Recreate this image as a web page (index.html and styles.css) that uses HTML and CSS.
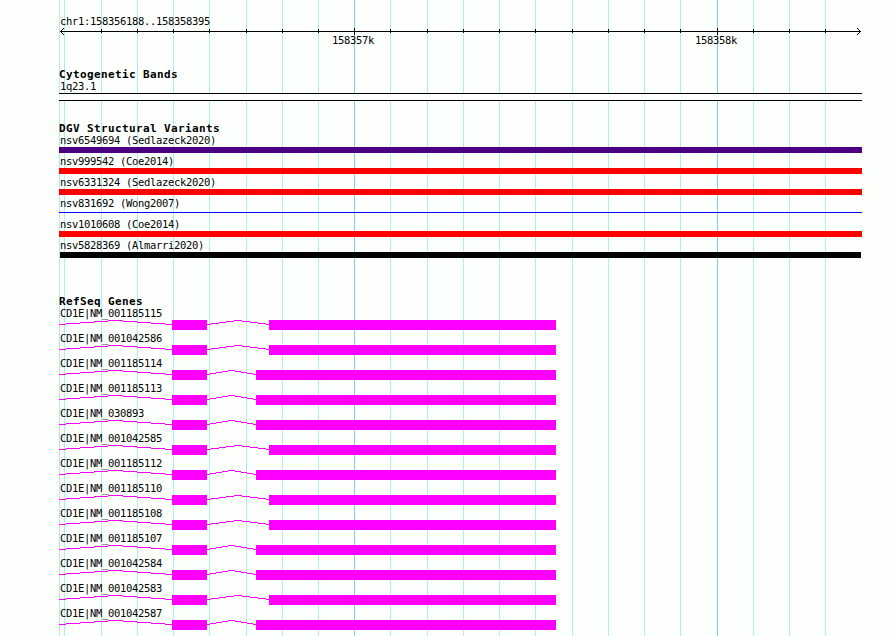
FILE: index.html
```html
<!DOCTYPE html>
<html lang="en">
<head>
    <meta charset="UTF-8">
    <meta name="viewport" content="width=device-width, initial-scale=1.0">
    <title>chr1:158356188..158358395</title>
    <link rel="stylesheet" href="styles.css">
    <script src="browser.js" defer></script>
</head>
<body>
    <div class="browser">
        <svg class="grid" id="grid" width="890" height="636" shape-rendering="crispEdges"></svg>

        <section class="ruler">
            <p class="label">chr1:158356188..158358395</p>
            <svg class="scale" id="scale" width="803" height="9" shape-rendering="crispEdges"></svg>
            <div class="scale-labels">
                <span class="label">158357k</span>
                <span class="label">158358k</span>
            </div>
        </section>

        <section class="bands">
            <h2>Cytogenetic Bands</h2>
            <p class="label">1q23.1</p>
            <div class="band"></div>
        </section>

        <section class="variants">
            <h2>DGV Structural Variants</h2>
            <div class="variant"><p class="label">nsv6549694 (Sedlazeck2020)</p><div class="bar complex"></div></div>
            <div class="variant"><p class="label">nsv999542 (Coe2014)</p><div class="bar loss"></div></div>
            <div class="variant"><p class="label">nsv6331324 (Sedlazeck2020)</p><div class="bar loss"></div></div>
            <div class="variant"><p class="label">nsv831692 (Wong2007)</p><div class="bar gain"></div></div>
            <div class="variant"><p class="label">nsv1010608 (Coe2014)</p><div class="bar loss"></div></div>
            <div class="variant"><p class="label">nsv5828369 (Almarri2020)</p><div class="bar other"></div></div>
        </section>

        <section class="genes">
            <h2>RefSeq Genes</h2>
            <div id="genes"></div>
        </section>
    </div>
</body>
</html>
```
FILE: styles.css
```css
body {
    margin: 0;
    background-color: #fdfffc;
    color: #000;
    font-family: "DejaVu Sans Mono", monospace;
}

.browser {
    position: relative;
    width: 890px;
    height: 636px;
    overflow: hidden;
}

/* vertical lines behind all tracks */
.grid {
    position: absolute;
    top: 0;
    left: 0;
}

.minor {
    fill: #afeeee;
}

.major {
    fill: #87ceeb;
}

section {
    position: relative;
    box-sizing: border-box;
    width: 803px;
    margin-left: 59px;
}

h2 {
    margin: 0;
    height: 12px;
    font-size: 11px;
    line-height: 14px;
    letter-spacing: 0.378px;
    white-space: pre;
}

.label {
    margin: 0;
    padding-left: 1px;
    height: 12px;
    font-size: 10.5px;
    line-height: 12px;
    letter-spacing: -0.321px;
    white-space: pre;
}

.ruler {
    height: 68px;
    padding-top: 15px;
}

.scale {
    display: block;
}

.scale-labels {
    display: flex;
    gap: 320px;
    padding-left: 272px;
    margin-top: -2px;
}

.bands {
    height: 54px;
}

.band {
    height: 6px;
    margin-top: 1px;
    border-top: 1px solid #000;
    border-bottom: 1px solid #000;
    background-color: #fff;
}

.variants {
    height: 173px;
}

.variant {
    height: 21px;
}

.bar {
    height: 6px;
    margin-top: 1px;
}

.complex {
    background-color: #4b0082;
}

.loss {
    background-color: #f00;
}

.gain {
    height: 1px;
    margin-top: 3px;
    background-color: #00f;
}

.other {
    margin-left: 1px;
    margin-right: 1px;
    background-color: #000;
}

.gene {
    height: 25px;
}

.gene svg {
    display: block;
    margin-top: 1px;
}

.exon {
    fill: #f0f;
}
```
FILE: browser.js
```js
const MINOR = [59, 64, 101, 137, 173, 209, 246, 282, 318, 390, 427, 463, 499, 535, 572, 608, 644, 680, 753, 789, 825];
const MAJOR = [354, 717];
const LEFT = 59;

// name, start of the last exon
const GENES = [
    ['CD1E|NM_001185115', 269],
    ['CD1E|NM_001042586', 269],
    ['CD1E|NM_001185114', 256],
    ['CD1E|NM_001185113', 256],
    ['CD1E|NM_030893', 256],
    ['CD1E|NM_001042585', 269],
    ['CD1E|NM_001185112', 256],
    ['CD1E|NM_001185110', 269],
    ['CD1E|NM_001185108', 269],
    ['CD1E|NM_001185107', 256],
    ['CD1E|NM_001042584', 256],
    ['CD1E|NM_001042583', 269],
    ['CD1E|NM_001042587', 256]
];

function rect(x, y, w, h, cls) {
    return `<rect x="${x}" y="${y}" width="${w}" height="${h}" class="${cls}"/>`;
}

// peaked line from x1 to x2, 4px high, drawn in pixel steps
function intron(x1, x2) {
    const mid = Math.floor((x1 + x2 - 1) / 2);
    let out = '';
    for (let x = x1; x < x2; x++) {
        const t = x <= mid ? (x - x1) / (mid - x1) : (x2 - x) / (x2 - mid);
        out += rect(x - LEFT, 4 - Math.round(4 * t), 1, 1, 'exon');
    }
    return out;
}

document.getElementById('grid').innerHTML =
    MINOR.map(x => rect(x, 0, 1, 636, 'minor')).join('') +
    MAJOR.map(x => rect(x, 0, 1, 636, 'major')).join('');

let scale = rect(1, 4, 801, 1, 'line');
MINOR.slice(2).forEach(x => { scale += rect(x - LEFT, 2, 1, 4, 'line'); });
MAJOR.forEach(x => { scale += rect(x - LEFT, 1, 1, 7, 'line'); });
for (let i = 1; i <= 3; i++) {
    [4 - i, 4 + i].forEach(y => {
        scale += rect(1 + i, y, 1, 1, 'line') + rect(801 - i, y, 1, 1, 'line');
    });
}
document.getElementById('scale').innerHTML = scale;

document.getElementById('genes').innerHTML = GENES.map(([name, start]) => `
    <div class="gene">
        <p class="label">${name}</p>
        <svg width="803" height="10" shape-rendering="crispEdges">
            ${intron(59, 172)}${rect(113, 0, 35, 10, 'exon')}
            ${intron(207, start)}${rect(start - LEFT, 0, 556 - start, 10, 'exon')}
        </svg>
    </div>`).join('');
```
